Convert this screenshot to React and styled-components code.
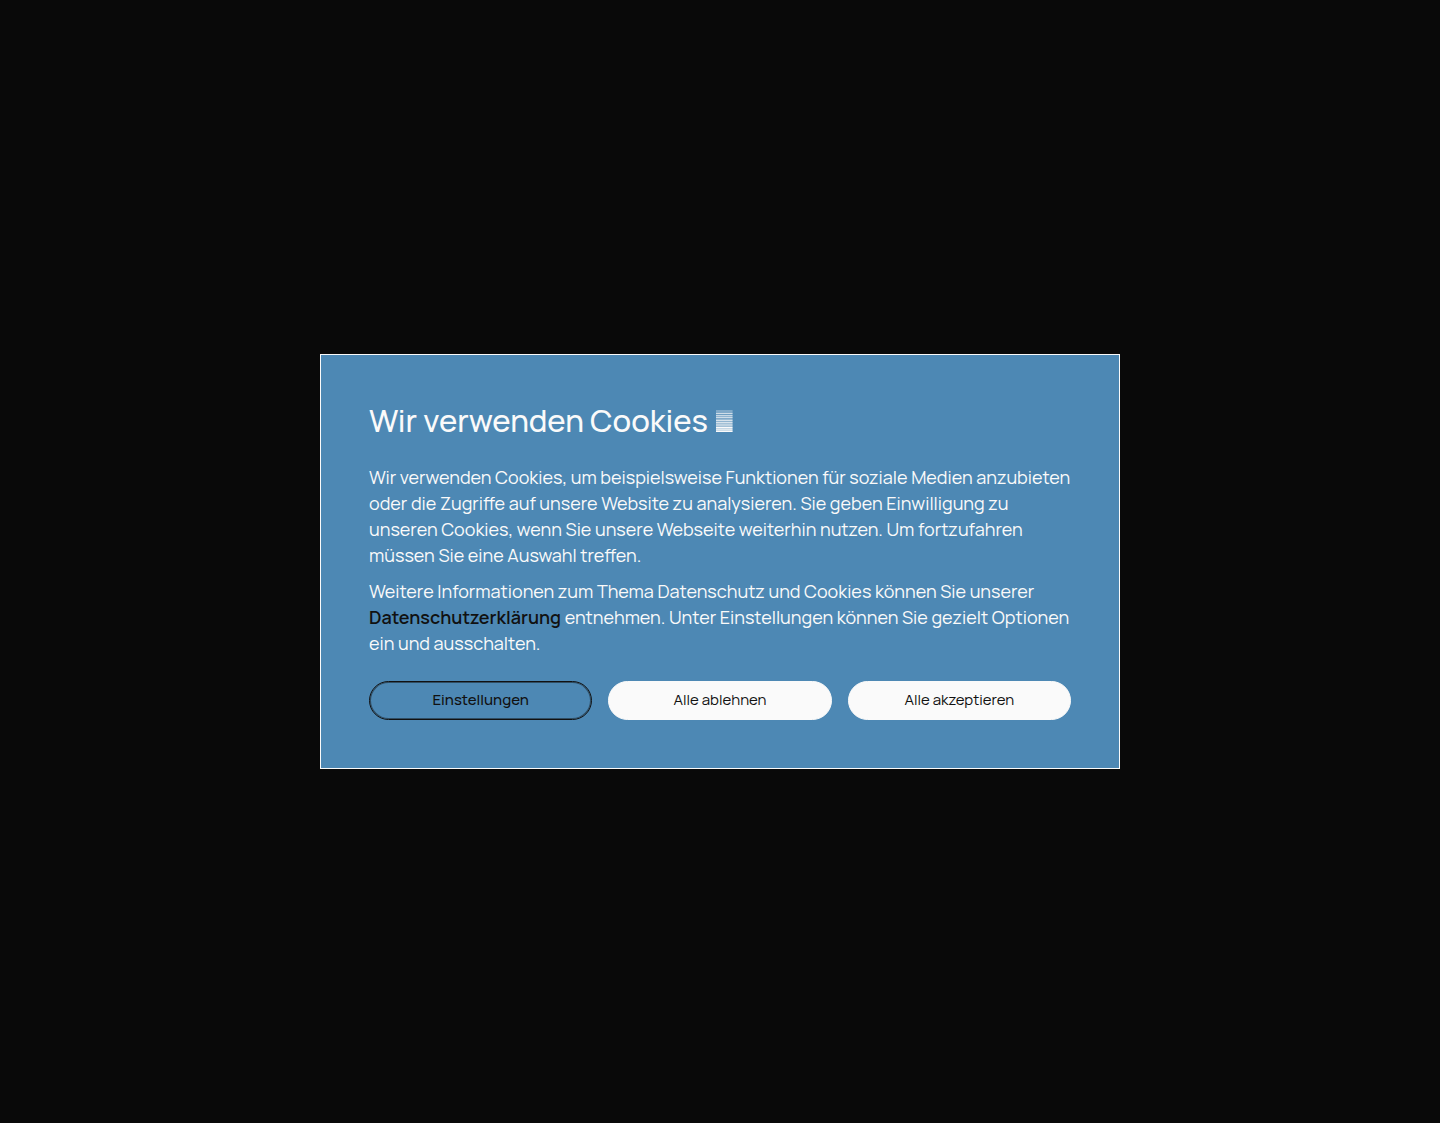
import React from "react";
import styled, { createGlobalStyle } from "styled-components";

const GlobalStyle = createGlobalStyle`
  *, *::before, *::after {
    box-sizing: border-box;
  }
  body {
    margin: 0;
    background: #090909;
    color: #fafafa;
    font-family: Manrope, Inter, "Open Sans", sans-serif;
  }
`;

const Backdrop = styled.main`
  display: flex;
  align-items: center;
  justify-content: center;
  min-height: 100vh;
  padding: 16px;
`;

const Dialog = styled.section`
  width: 100%;
  max-width: 800px;
  padding: 48px;
  background: #4d88b4;
  border: 1px solid #fafafa;
`;

const Title = styled.h1`
  display: flex;
  align-items: center;
  gap: 8px;
  margin: 0 0 27px;
  font-size: 31px;
  line-height: 34px;
  font-weight: 500;
`;

const Mark = styled.svg`
  flex: none;
  align-self: flex-end;
  width: 17px;
  height: 27px;
`;

const Copy = styled.div`
  display: grid;
  gap: 10px;
  margin-bottom: 25px;
`;

const Paragraph = styled.p`
  margin: 0;
  font-size: 18px;
  line-height: 26px;
  font-weight: 400;
`;

const PolicyLink = styled.a`
  color: #111111;
  font-weight: 600;
  text-decoration: none;
`;

const Actions = styled.div`
  display: grid;
  grid-template-columns: repeat(3, 1fr);
  gap: 16px;
`;

const Button = styled.button`
  height: 39px;
  padding: 0 16px 2px;
  border: 1px solid ${({ $outlined }) => ($outlined ? "#111111" : "#fafafa")};
  border-radius: 20px;
  background: ${({ $outlined }) => ($outlined ? "transparent" : "#fafafa")};
  box-shadow: ${({ $outlined }) =>
    $outlined ? "inset 0 0 0 1px rgba(17, 17, 17, 0.5)" : "none"};
  color: #111111;
  font-family: inherit;
  font-size: 15px;
  line-height: 20px;
  font-weight: ${({ $outlined }) => ($outlined ? 500 : 400)};
  cursor: pointer;
`;

const stripes = [
  0.3, 0.3, 0.3, 0.75, 0.2, 0.7, 0.4, 0.75, 0.3, 0.45, 0.8,
  0.4, 0.8, 0.5, 0.65, 0.65, 0.5, 1, 0.7, 0.85, 0.75, 1,
];

function StripeMark() {
  return (
    <Mark viewBox="0 0 17 27" aria-hidden="true" fill="#fafafa" shapeRendering="crispEdges">
      {stripes.map((opacity, y) => (
        <g key={y} opacity={opacity}>
          <rect y={y} width="16" height="1" />
          <rect x="16" y={y} width="1" height="1" opacity="0.6" />
        </g>
      ))}
    </Mark>
  );
}

export default function App() {
  return (
    <>
      <GlobalStyle />
      <Backdrop>
        <Dialog role="dialog" aria-labelledby="cookie-title">
          <Title id="cookie-title">
            Wir verwenden Cookies
            <StripeMark />
          </Title>
          <Copy>
            <Paragraph>
              Wir verwenden Cookies, um beispielsweise Funktionen für soziale Medien
              anzubieten oder die Zugriffe auf unsere Website zu analysieren. Sie geben
              Einwilligung zu unseren Cookies, wenn Sie unsere Webseite weiterhin nutzen.
              Um fortzufahren müssen Sie eine Auswahl treffen.
            </Paragraph>
            <Paragraph>
              Weitere Informationen zum Thema Datenschutz und Cookies können Sie unserer{" "}
              <PolicyLink href="#datenschutz">Datenschutzerklärung</PolicyLink> entnehmen.
              Unter Einstellungen können Sie gezielt Optionen ein und ausschalten.
            </Paragraph>
          </Copy>
          <Actions>
            <Button type="button" $outlined>Einstellungen</Button>
            <Button type="button">Alle ablehnen</Button>
            <Button type="button">Alle akzeptieren</Button>
          </Actions>
        </Dialog>
      </Backdrop>
    </>
  );
}
